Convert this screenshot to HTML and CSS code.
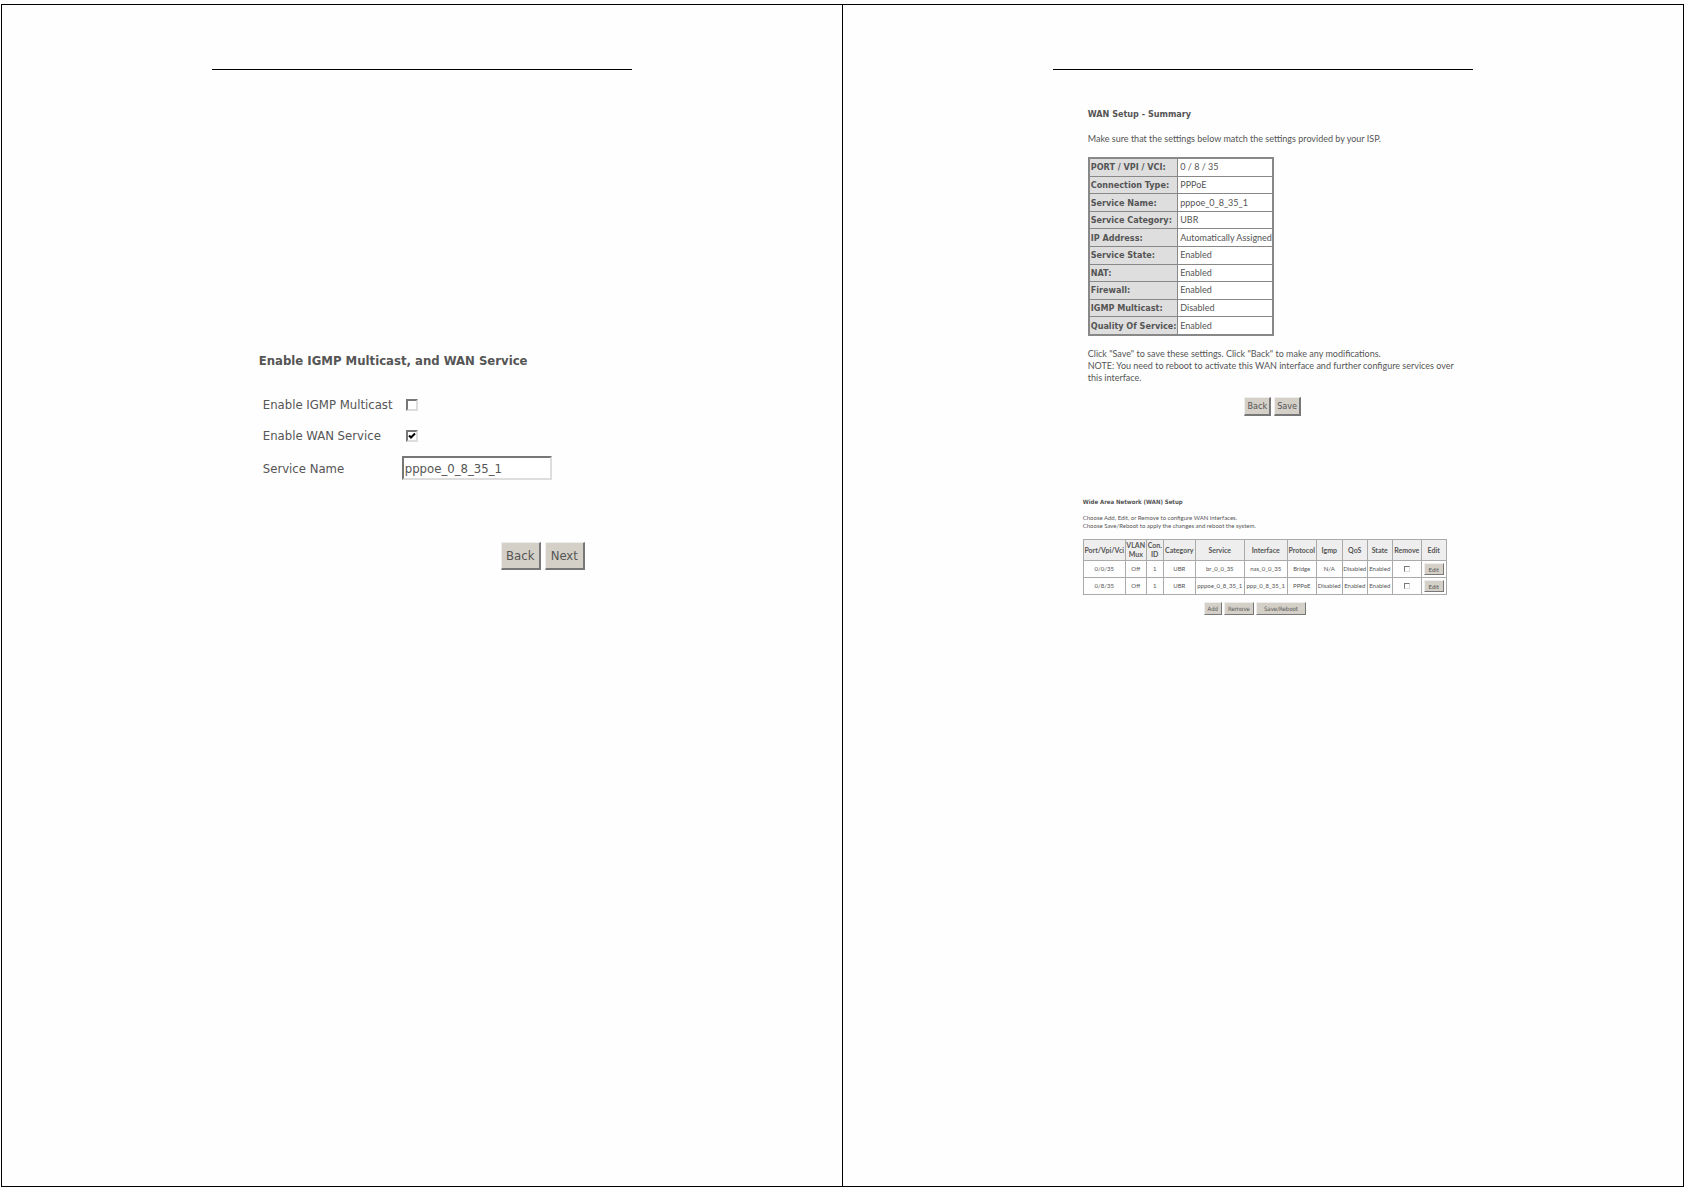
FILE: index.html
```
<!DOCTYPE html>
<html lang="en">
<head>
    <meta charset="UTF-8">
    <meta name="viewport" content="width=device-width, initial-scale=1.0">
    <title>WAN Setup</title>
    <link rel="stylesheet" href="styles.css">
</head>
<body>
    <main class="spread">
        <section class="page">
            <hr class="page-rule">
            <form class="service">
                <h1>Enable IGMP Multicast, and WAN Service</h1>
                <div class="fields">
                    <label for="igmp">Enable IGMP Multicast</label>
                    <input type="checkbox" id="igmp">
                    <label for="wan">Enable WAN Service</label>
                    <input type="checkbox" id="wan" checked>
                    <label for="name">Service Name</label>
                    <input type="text" id="name" value="pppoe_0_8_35_1">
                </div>
                <div class="buttons">
                    <button type="button">Back</button>
                    <button type="button">Next</button>
                </div>
            </form>
        </section>

        <section class="page">
            <hr class="page-rule">
            <div class="summary">
                <h2>WAN Setup - Summary</h2>
                <p>Make sure that the settings below match the settings provided by your ISP.</p>
                <table>
                    <tr><th scope="row">PORT / VPI / VCI:</th><td>0 / 8 / 35</td></tr>
                    <tr><th scope="row">Connection Type:</th><td>PPPoE</td></tr>
                    <tr><th scope="row">Service Name:</th><td>pppoe_0_8_35_1</td></tr>
                    <tr><th scope="row">Service Category:</th><td>UBR</td></tr>
                    <tr><th scope="row">IP Address:</th><td>Automatically Assigned</td></tr>
                    <tr><th scope="row">Service State:</th><td>Enabled</td></tr>
                    <tr><th scope="row">NAT:</th><td>Enabled</td></tr>
                    <tr><th scope="row">Firewall:</th><td>Enabled</td></tr>
                    <tr><th scope="row">IGMP Multicast:</th><td>Disabled</td></tr>
                    <tr><th scope="row">Quality Of Service:</th><td>Enabled</td></tr>
                </table>
                <p>Click "Save" to save these settings. Click "Back" to make any modifications.<br>
                NOTE: You need to reboot to activate this WAN interface and further configure services over<br>
                this interface.</p>
                <div class="buttons">
                    <button type="button">Back</button>
                    <button type="button">Save</button>
                </div>
            </div>

            <div class="wan">
                <h2>Wide Area Network (WAN) Setup</h2>
                <p>Choose Add, Edit, or Remove to configure WAN interfaces.<br>
                Choose Save/Reboot to apply the changes and reboot the system.</p>
                <table>
                    <colgroup>
                        <col class="col-port"><col class="col-vlan"><col class="col-con"><col class="col-category">
                        <col class="col-service"><col class="col-interface"><col class="col-protocol"><col class="col-igmp">
                        <col class="col-state"><col class="col-state"><col class="col-remove"><col class="col-edit">
                    </colgroup>
                    <thead>
                        <tr>
                            <th>Port/Vpi/Vci</th>
                            <th>VLAN<br>Mux</th>
                            <th>Con.<br>ID</th>
                            <th>Category</th>
                            <th>Service</th>
                            <th>Interface</th>
                            <th>Protocol</th>
                            <th>Igmp</th>
                            <th>QoS</th>
                            <th>State</th>
                            <th>Remove</th>
                            <th>Edit</th>
                        </tr>
                    </thead>
                    <tbody>
                        <tr>
                            <td>0/0/35</td>
                            <td>Off</td>
                            <td>1</td>
                            <td>UBR</td>
                            <td>br_0_0_35</td>
                            <td>nas_0_0_35</td>
                            <td>Bridge</td>
                            <td>N/A</td>
                            <td>Disabled</td>
                            <td>Enabled</td>
                            <td><input type="checkbox" aria-label="Remove br_0_0_35"></td>
                            <td><button type="button">Edit</button></td>
                        </tr>
                        <tr>
                            <td>0/8/35</td>
                            <td>Off</td>
                            <td>1</td>
                            <td>UBR</td>
                            <td>pppoe_0_8_35_1</td>
                            <td>ppp_0_8_35_1</td>
                            <td>PPPoE</td>
                            <td>Disabled</td>
                            <td>Enabled</td>
                            <td>Enabled</td>
                            <td><input type="checkbox" aria-label="Remove pppoe_0_8_35_1"></td>
                            <td><button type="button">Edit</button></td>
                        </tr>
                    </tbody>
                </table>
                <div class="buttons">
                    <button type="button">Add</button>
                    <button type="button">Remove</button>
                    <button type="button" class="wide">Save/Reboot</button>
                </div>
            </div>
        </section>
    </main>
</body>
</html>
```
FILE: styles.css
```
* {
    box-sizing: border-box;
}

body {
    margin: 0;
    padding: 4px 0 3px 1px;
    min-height: 100vh;
    display: flex;
    background-color: #fefefe;
    color: #555;
    font-family: "DejaVu Sans Condensed", "DejaVu Sans", Tahoma, sans-serif;
}

h1, h2, p {
    margin: 0;
}

.spread {
    flex: 1;
    display: grid;
    grid-template-columns: 1fr 1fr;
    border: 1px solid #000;
}

.page:first-child {
    border-right: 1px solid #000;
}

.page-rule {
    width: 50%;
    height: 1px;
    margin: 64px auto 0;
    border: 0;
    background-color: #000;
}

button {
    font-family: inherit;
    color: #555;
    background-color: #d4d0c8;
    border: 1px solid;
    border-color: #eee #777 #777 #eee;
    padding: 0;
}

input[type="checkbox"] {
    appearance: none;
    width: 12px;
    height: 12px;
    margin: 0;
    background-color: #fff;
    border: 2px solid;
    border-color: #777 #ddd #ddd #777;
}

input[type="checkbox"]:checked {
    background-image: url("data:image/svg+xml,%3Csvg xmlns='http://www.w3.org/2000/svg' viewBox='0 0 8 8'%3E%3Cpath d='M1 3.5 L3 5.5 L7 1.5' fill='none' stroke='black' stroke-width='2'/%3E%3C/svg%3E");
}

/* Service form */
.service {
    width: 326px;
    margin: 280px auto 0;
    font-size: 13px;
}

.service h1 {
    font-size: 13px;
    line-height: 22px;
}

.fields {
    display: grid;
    grid-template-columns: 139px 150px;
    grid-template-rows: 31px 31px 34px;
    align-items: center;
    margin: 17px 0 0 4px;
}

.fields input[type="checkbox"] {
    margin-left: 4px;
}

.fields input[type="text"] {
    height: 24px;
    padding: 0 1px;
    font: inherit;
    color: inherit;
    background-color: #fff;
    border: 2px solid;
    border-color: #777 #ddd #ddd #777;
}

.service .buttons {
    display: flex;
    justify-content: flex-end;
    gap: 4px;
    margin-top: 57px;
}

.service button {
    width: 40px;
    height: 28px;
    font-size: 13px;
    border-width: 1px 2px 2px 1px;
}

/* Summary */
.summary {
    width: 390px;
    margin: 38px auto 0;
    padding-left: 20px;
    font-size: 9px;
    line-height: 12px;
}

.summary h2 {
    font-size: 9px;
}

.summary p,
.summary td,
.wan p,
.wan table {
    font-family: Lato, "Liberation Sans", sans-serif;
}

.summary h2 + p {
    margin: 13px 0 12px;
}

.summary table {
    width: 186px;
    height: 179px;
    margin-bottom: 12px;
    table-layout: fixed;
    border-collapse: collapse;
    border: 2px solid #888;
}

.summary th,
.summary td {
    padding: 0 2px;
    border: 1px solid #888;
    text-align: left;
    white-space: nowrap;
}

.summary th {
    width: 89px;
    padding: 0 0 0 1px;
    background-color: #dedede;
}

.summary td {
    background-color: #fff;
}

.summary .buttons {
    display: flex;
    justify-content: center;
    gap: 3px;
    margin-top: 13px;
}

.summary button {
    height: 19px;
    padding: 0 2px;
    font-size: 9px;
    border-width: 1px 2px 2px 1px;
}

/* WAN table */
.wan {
    width: 368px;
    margin: 82px auto 0;
    padding-left: 4px;
    font-size: 6px;
    line-height: 8px;
}

.wan h2 {
    font-size: 6px;
}

.wan p {
    margin: 8px 0 9px;
}

.wan table {
    width: 100%;
    table-layout: fixed;
    border-collapse: collapse;
    border: 1px solid #999;
}

.wan th,
.wan td {
    height: 17px;
    padding: 0;
    border: 1px solid #aaa;
    text-align: center;
    white-space: nowrap;
}

.wan th {
    height: 21px;
    font-size: 7px;
    line-height: 9px;
    background-color: #eee;
}

.col-port { width: 42px; }
.col-vlan { width: 21px; }
.col-con { width: 17px; }
.col-category { width: 32px; }
.col-service { width: 49px; }
.col-interface { width: 43px; }
.col-protocol { width: 29px; }
.col-igmp { width: 26px; }
.col-state { width: 25px; }
.col-remove { width: 29px; }
.col-edit { width: 25px; }

.wan td input[type="checkbox"] {
    display: block;
    width: 6px;
    height: 6px;
    margin: 0 auto;
    border-width: 1px;
}

.wan button {
    height: 13px;
    font-size: 6px;
}

.wan td button {
    display: block;
    width: 20px;
    height: 12px;
    margin: 0 auto;
}

.wan .buttons {
    display: flex;
    justify-content: center;
    gap: 2px;
    margin-top: 7px;
    padding-right: 20px;
}

.wan .buttons button {
    padding: 0 3px;
}

.wan .buttons .wide {
    padding: 0 7px;
}
```
